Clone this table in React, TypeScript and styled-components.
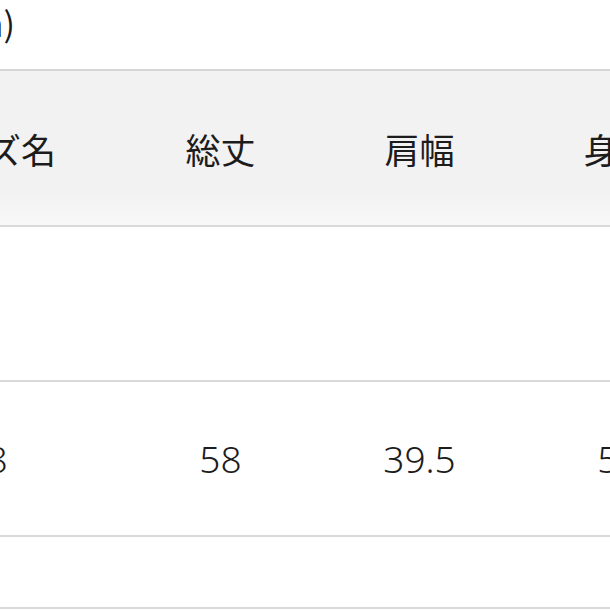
import React from 'react'
import styled, { createGlobalStyle } from 'styled-components'

const GlobalStyle = createGlobalStyle`
  html, body {
    margin: 0;
    padding: 0;
    background: #ffffff;
    overflow: hidden;
  }
  body {
    font-family: "Noto Sans CJK JP", "Noto Sans", sans-serif;
    color: #1e1e1e;
  }
`

const Page = styled.div`
  width: 610px;
  height: 610px;
  overflow: hidden;
`

const Unit = styled.div`
  display: flex;
  justify-content: flex-end;
  width: 15px;
  height: 69px;
  box-sizing: border-box;
  font-size: 34px;
  line-height: 46px;
  white-space: nowrap;
  color: #1a1a1a;
`

const Table = styled.div`
  display: grid;
  grid-template-columns: 269px 199px 199px 199px;
  margin-left: -148px;
  border-top: 2px solid #d6d6d6;
`

const Row = styled.div<{ $head?: boolean; $height: number }>`
  display: contents;

  & > div {
    height: ${(p) => p.$height}px;
    background: ${(p) => (p.$head ? 'linear-gradient(#f2f2f2 80%, #f8f8f8)' : '#ffffff')};
    border-bottom: 2px solid #d9d9d9;
  }
`

const Cell = styled.div<{ $num?: boolean }>`
  display: flex;
  align-items: center;
  justify-content: center;
  white-space: nowrap;
  font-family: ${(p) =>
    p.$num ? '"Noto Sans", sans-serif' : '"Noto Sans CJK JP", sans-serif'};
  font-size: ${(p) => (p.$num ? 37 : 35)}px;
  font-weight: ${(p) => (p.$num ? 300 : 400)};
  color: #1c1c1c;
`

const headers = ['サイズ名', '総丈', '肩幅', '身幅']
const rows: { values: string[]; height: number }[] = [
  { values: ['', '', '', ''], height: 153 },
  { values: ['38', '58', '39.5', '51'], height: 153 },
  { values: ['', '', '', ''], height: 70 },
]

export default function App() {
  return (
    <Page>
      <GlobalStyle />
      <Unit>(cm)</Unit>
      <Table>
        <Row $head $height={154}>
          {headers.map((h) => (
            <Cell key={h}>{h}</Cell>
          ))}
        </Row>
        {rows.map((r, i) => (
          <Row key={i} $height={r.height}>
            {r.values.map((v, j) => (
              <Cell key={j} $num>
                {v}
              </Cell>
            ))}
          </Row>
        ))}
      </Table>
    </Page>
  )
}
